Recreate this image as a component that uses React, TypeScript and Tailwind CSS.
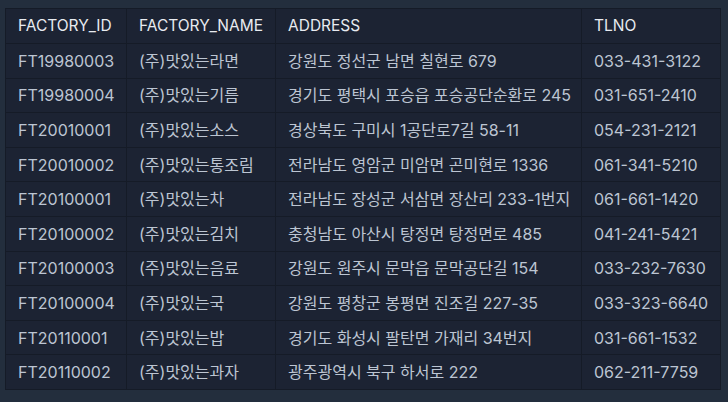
const rows = [
  ['FT19980003', '(주)맛있는라면', '강원도 정선군 남면 칠현로 679', '033-431-3122'],
  ['FT19980004', '(주)맛있는기름', '경기도 평택시 포승읍 포승공단순환로 245', '031-651-2410'],
  ['FT20010001', '(주)맛있는소스', '경상북도 구미시 1공단로7길 58-11', '054-231-2121'],
  ['FT20010002', '(주)맛있는통조림', '전라남도 영암군 미암면 곤미현로 1336', '061-341-5210'],
  ['FT20100001', '(주)맛있는차', '전라남도 장성군 서삼면 장산리 233-1번지', '061-661-1420'],
  ['FT20100002', '(주)맛있는김치', '충청남도 아산시 탕정면 탕정면로 485', '041-241-5421'],
  ['FT20100003', '(주)맛있는음료', '강원도 원주시 문막읍 문막공단길 154', '033-232-7630'],
  ['FT20100004', '(주)맛있는국', '강원도 평창군 봉평면 진조길 227-35', '033-323-6640'],
  ['FT20110001', '(주)맛있는밥', '경기도 화성시 팔탄면 가재리 34번지', '031-661-1532'],
  ['FT20110002', '(주)맛있는과자', '광주광역시 북구 하서로 222', '062-211-7759'],
];

const columns = ['FACTORY_ID', 'FACTORY_NAME', 'ADDRESS', 'TLNO'];

export default function App() {
  return (
    <div
      className="w-[728px] h-[402px] bg-[#232e3d] pt-2 pl-[5px] overflow-hidden"
      style={{fontFamily: 'Inter, "Noto Sans CJK KR", sans-serif'}}
    >
      <table className="border-collapse table-fixed w-[715px] bg-[#1c2333]">
        <colgroup>
          <col className="w-[121px]" />
          <col className="w-[149px]" />
          <col className="w-[306px]" />
          <col className="w-[139px]" />
        </colgroup>
        <thead>
          <tr className="h-[35px]">
            {columns.map(col => (
              <th
                key={col}
                className="border border-[#151b27] px-3 text-left text-[15.5px] font-normal text-[#e8ebf0] whitespace-nowrap"
              >
                {col}
              </th>
            ))}
          </tr>
        </thead>
        <tbody>
          {rows.map(row => (
            <tr key={row[0]} className="h-[34.6px]">
              {row.map((cell, i) => (
                <td
                  key={i}
                  className="border border-[#151b27] px-3 text-[16px] text-[#bcc5d2] whitespace-nowrap"
                >
                  {cell}
                </td>
              ))}
            </tr>
          ))}
        </tbody>
      </table>
    </div>
  );
}
